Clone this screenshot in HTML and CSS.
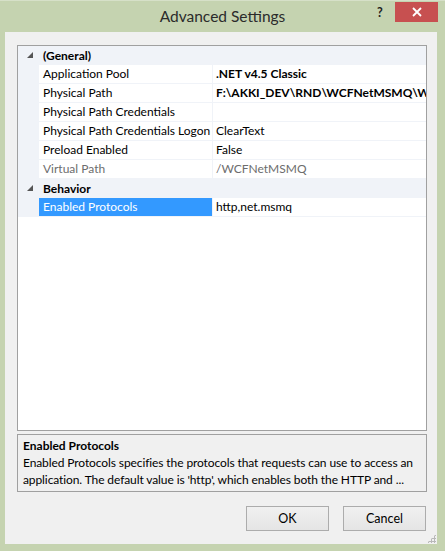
FILE: index.html
```html
<!DOCTYPE html>
<html lang="en">
<head>
  <meta charset="UTF-8">
  <title>Advanced Settings</title>
  <link rel="stylesheet" href="styles.css">
</head>
<body>
  <div class="window">
    <div class="titlebar">
      <span class="title">Advanced Settings</span>
      <span class="help">?</span>
      <span class="close">
        <svg width="10" height="10" viewBox="0 0 10 10"><path d="M1 1 L9 9 M9 1 L1 9" stroke="#fff" stroke-width="1.8"/></svg>
      </span>
    </div>

    <div class="client">
      <div class="grid">
        <!-- General category -->
        <div class="category">
          <span class="expander"><svg width="6" height="6" viewBox="0 0 6 6"><path d="M6 0 L6 6 L0 6 Z" fill="#555"/></svg></span>
          <span>(General)</span>
        </div>
        <div class="prop"><span class="name">Application Pool</span><span class="value bold">.NET v4.5 Classic</span></div>
        <div class="prop"><span class="name">Physical Path</span><span class="value bold">F:\AKKI_DEV\RND\WCFNetMSMQ\WCFNetMSMQ</span></div>
        <div class="prop"><span class="name">Physical Path Credentials</span><span class="value"></span></div>
        <div class="prop"><span class="name">Physical Path Credentials Logon</span><span class="value">ClearText</span></div>
        <div class="prop"><span class="name">Preload Enabled</span><span class="value">False</span></div>
        <div class="prop readonly"><span class="name">Virtual Path</span><span class="value">/WCFNetMSMQ</span></div>

        <!-- Behavior category -->
        <div class="category">
          <span class="expander"><svg width="6" height="6" viewBox="0 0 6 6"><path d="M6 0 L6 6 L0 6 Z" fill="#555"/></svg></span>
          <span>Behavior</span>
        </div>
        <div class="prop selected"><span class="name">Enabled Protocols</span><span class="value">http,net.msmq</span></div>
      </div>

      <div class="description">
        <div class="desc-title">Enabled Protocols</div>
        <div class="desc-text">Enabled Protocols specifies the protocols that requests can use to access an application. The default value is 'http', which enables both the HTTP and ...</div>
      </div>

      <div class="buttons">
        <button>OK</button>
        <button>Cancel</button>
      </div>
      <div class="grip"></div>
    </div>
  </div>
</body>
</html>
```

FILE: styles.css
```css
body {
  margin: 0;
  background: #c5d3b0;
  font-family: Lato, "Noto Sans", sans-serif;
  font-size: 12px;
  color: #000;
}

.window {
  width: 445px;
  height: 551px;
  display: flex;
  flex-direction: column;
  overflow: hidden;
}

.titlebar {
  height: 32px;
  position: relative;
  border-top: 1px solid #d6e0c8;
  box-sizing: border-box;
}

.title {
  display: block;
  text-align: center;
  font-size: 15.5px;
  line-height: 31px;
  color: #2b2b2b;
}

.help {
  position: absolute;
  left: 377px;
  top: 4px;
  font-weight: bold;
  font-size: 12.5px;
  color: #222;
}

.close {
  position: absolute;
  left: 395px;
  top: 1px;
  width: 43px;
  height: 20px;
  background: #c75050;
  display: flex;
  align-items: center;
  justify-content: center;
}

.client {
  flex: 1;
  margin: 0 8px 7px 5px;
  background: #f0f0f0;
  padding: 13px 10px 0 12px;
  display: flex;
  flex-direction: column;
  position: relative;
}

.grid {
  height: 386px;
  box-sizing: border-box;
  border: 1px solid #a0a0a0;
  background: #fff;
  overflow: hidden;
}

.category,
.prop {
  height: 19px;
  display: flex;
  align-items: center;
  white-space: nowrap;
  border-bottom: 1px solid #f0f3f8;
  box-sizing: border-box;
}

.category {
  background: #f0f3f8;
  font-weight: bold;
}

.expander {
  width: 25px;
  padding-left: 9px;
  box-sizing: border-box;
  display: flex;
  align-items: center;
}

.prop {
  padding-left: 21px;
  background: #f0f3f8;
}

.name {
  width: 174px;
  flex: none;
  background: #fff;
  height: 18px;
  line-height: 18px;
  padding-left: 4px;
  box-sizing: border-box;
  overflow: hidden;
  border-right: 1px solid #f0f3f8;
}

.value {
  flex: 1;
  background: #fff;
  height: 18px;
  line-height: 18px;
  padding-left: 3px;
  overflow: hidden;
}

.bold {
  font-weight: bold;
}

.readonly .name,
.readonly .value {
  color: #6d6d6d;
}

.selected .name {
  background: #3399ff;
  color: #fff;
}

.description {
  margin-top: 3px;
  height: 58px;
  box-sizing: border-box;
  border: 1px solid #a0a0a0;
  padding: 2px 5px;
}

.desc-title {
  font-weight: bold;
  line-height: 17px;
}

.desc-text {
  line-height: 17px;
  letter-spacing: -0.1px;
}

.buttons {
  display: flex;
  justify-content: flex-end;
  gap: 14px;
  margin-top: 14px;
  margin-right: 1px;
}

button {
  width: 83px;
  height: 25px;
  font-family: inherit;
  font-size: 12.5px;
  border: 1px solid #acacac;
  background: linear-gradient(#f0f0f0, #e5e5e5);
  color: #000;
  padding: 0;
}

.grip {
  position: absolute;
  right: 1px;
  bottom: 1px;
  width: 9px;
  height: 9px;
  background-image: radial-gradient(circle, #b8b8b8 1px, transparent 1.2px);
  background-size: 3px 3px;
  clip-path: polygon(100% 0, 100% 100%, 0 100%);
}
```
